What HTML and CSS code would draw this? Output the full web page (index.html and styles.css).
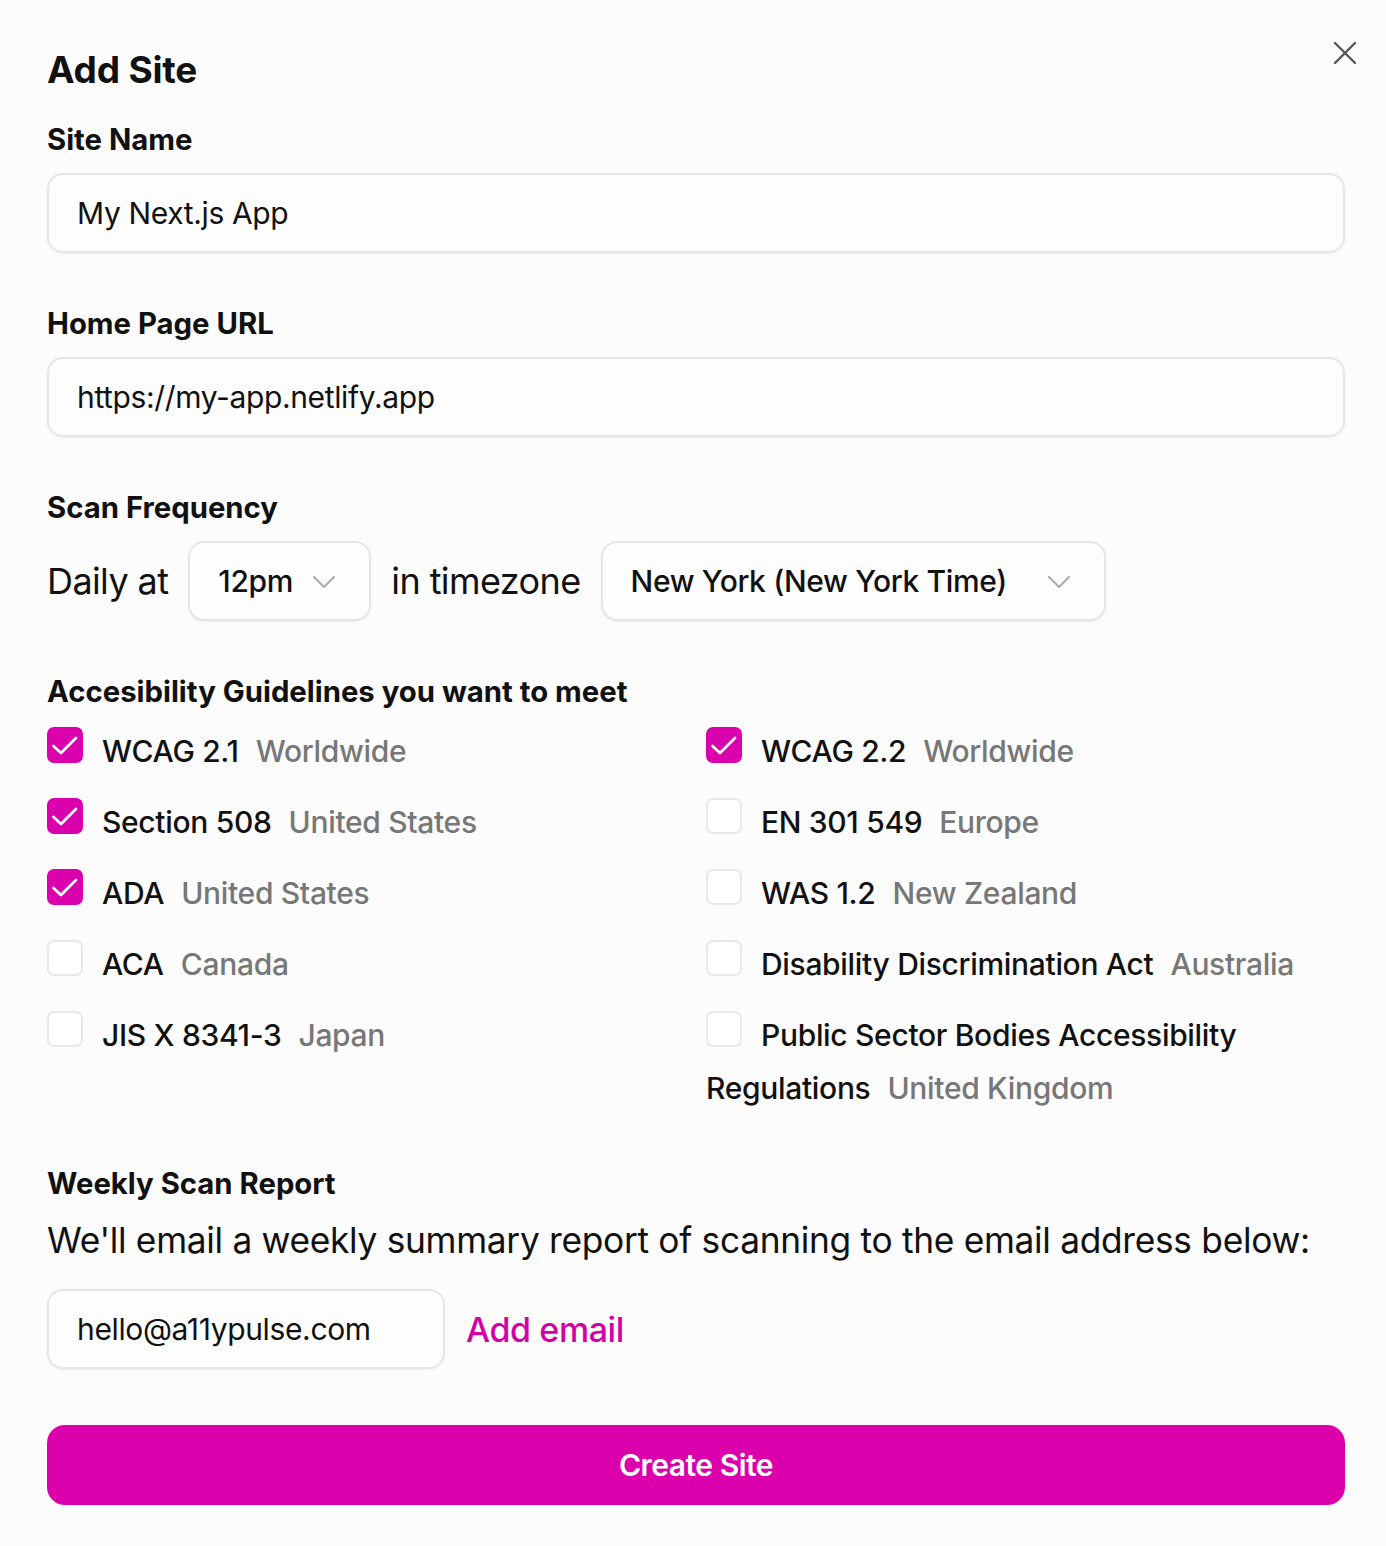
FILE: index.html
```html
<!DOCTYPE html>
<html lang="en">
<head>
<meta charset="utf-8">
<title>Add Site</title>
<link rel="stylesheet" href="styles.css">
</head>
<body>
<div class="modal">
  <button class="close" aria-label="Close">
    <svg width="24" height="24" viewBox="0 0 24 24"><path d="M2 2 L22 22 M22 2 L2 22" stroke="#555" stroke-width="2.4" stroke-linecap="round" fill="none"/></svg>
  </button>
  <h1 class="title">Add Site</h1>

  <section class="field">
    <div class="label">Site Name</div>
    <div class="input">My Next.js App</div>
  </section>

  <section class="field">
    <div class="label">Home Page URL</div>
    <div class="input">https://my-app.netlify.app</div>
  </section>

  <section class="field">
    <div class="label">Scan Frequency</div>
    <div class="freq">
      <span class="freq-text">Daily at</span>
      <div class="select select-time"><span>12pm</span><svg class="chev" width="22" height="12" viewBox="0 0 22 12"><path d="M1 1 L11 11 L21 1" stroke="#aaa" stroke-width="2" fill="none" stroke-linecap="round" stroke-linejoin="round"/></svg></div>
      <span class="freq-text">in timezone</span>
      <div class="select select-tz"><span>New York (New York Time)</span><svg class="chev" width="22" height="12" viewBox="0 0 22 12"><path d="M1 1 L11 11 L21 1" stroke="#aaa" stroke-width="2" fill="none" stroke-linecap="round" stroke-linejoin="round"/></svg></div>
    </div>
  </section>

  <section class="field field-guides">
    <div class="label">Accesibility Guidelines you want to meet</div>
    <div class="guides">
      <div class="item"><span class="box on"><svg viewBox="0 0 36 36"><path d="M6.5 19 L14 26 L29 11" stroke="#fff" stroke-width="2.8" fill="none" stroke-linecap="round" stroke-linejoin="round"/></svg></span><span class="name">WCAG 2.1</span><span class="region">Worldwide</span></div>
      <div class="item"><span class="box on"><svg viewBox="0 0 36 36"><path d="M6.5 19 L14 26 L29 11" stroke="#fff" stroke-width="2.8" fill="none" stroke-linecap="round" stroke-linejoin="round"/></svg></span><span class="name">WCAG 2.2</span><span class="region">Worldwide</span></div>
      <div class="item"><span class="box on"><svg viewBox="0 0 36 36"><path d="M6.5 19 L14 26 L29 11" stroke="#fff" stroke-width="2.8" fill="none" stroke-linecap="round" stroke-linejoin="round"/></svg></span><span class="name">Section 508</span><span class="region">United States</span></div>
      <div class="item"><span class="box"></span><span class="name">EN 301 549</span><span class="region">Europe</span></div>
      <div class="item"><span class="box on"><svg viewBox="0 0 36 36"><path d="M6.5 19 L14 26 L29 11" stroke="#fff" stroke-width="2.8" fill="none" stroke-linecap="round" stroke-linejoin="round"/></svg></span><span class="name">ADA</span><span class="region">United States</span></div>
      <div class="item"><span class="box"></span><span class="name">WAS 1.2</span><span class="region">New Zealand</span></div>
      <div class="item"><span class="box"></span><span class="name">ACA</span><span class="region">Canada</span></div>
      <div class="item"><span class="box"></span><span class="name">Disability Discrimination Act</span><span class="region">Australia</span></div>
      <div class="item"><span class="box"></span><span class="name">JIS X 8341-3</span><span class="region">Japan</span></div>
      <div class="item"><span class="box"></span><span class="name-part">Public Sector Bodies Accessibility</span> <span class="name">Regulations</span><span class="region">United Kingdom</span></div>
    </div>
  </section>

  <section class="field field-report">
    <div class="label">Weekly Scan Report</div>
    <p class="desc">We'll email a weekly summary report of scanning to the email address below:</p>
    <div class="email-row">
      <div class="input input-email">hello@a11ypulse.com</div>
      <a class="add-email" href="#">Add email</a>
    </div>
  </section>

  <button class="submit">Create Site</button>
</div>
</body>
</html>
```
FILE: styles.css
```css
* { box-sizing: border-box; }
html, body {
  margin: 0;
  padding: 0;
  background: #fcfcfc;
}
body {
  font-family: Inter, "Noto Sans", "Liberation Sans", sans-serif;
  color: #111;
}
.modal {
  position: relative;
  width: 1298px;
  margin-left: 47px;
  padding-top: 48px;
  padding-bottom: 42px;
}
.close {
  position: absolute;
  top: 40px;
  right: -13px;
  width: 26px;
  height: 26px;
  padding: 1px;
  border: 0;
  background: none;
  cursor: pointer;
}
.close svg { display: block; }
.title {
  margin: 0 0 31px;
  font-size: 37px;
  line-height: 44px;
  font-weight: 700;
  letter-spacing: -0.2px;
}
.field { margin-bottom: 54px; }
.label {
  font-size: 29.3px;
  line-height: 34px;
  font-weight: 700;
  margin-bottom: 16px;
}
.input {
  height: 80px;
  border: 2px solid #e6e6e6;
  border-radius: 16px;
  background: #fdfdfd;
  box-shadow: 0 1px 3px rgba(0, 0, 0, 0.05);
  display: flex;
  align-items: center;
  padding-left: 28px;
  font-size: 30px;
  font-weight: 400;
  letter-spacing: -0.36px;
}
.freq {
  display: flex;
  align-items: center;
  gap: 20px;
}
.freq-text {
  font-size: 36px;
  font-weight: 400;
  letter-spacing: -0.6px;
}
.select {
  height: 80px;
  border: 2px solid #e6e6e6;
  border-radius: 16px;
  background: #fdfdfd;
  box-shadow: 0 1px 3px rgba(0, 0, 0, 0.05);
  display: flex;
  align-items: center;
  justify-content: space-between;
  padding: 0 34px 0 28px;
  font-size: 30px;
  font-weight: 500;
  letter-spacing: -0.37px;
}
.select-time { width: 183px; }
.select-tz { width: 505px; }
.chev { display: block; margin-top: 2px; }
.field-guides { margin-bottom: 52px; }
.guides {
  display: grid;
  grid-template-columns: 639px 639px;
  column-gap: 20px;
  row-gap: 18px;
}
.item {
  font-size: 30px;
  line-height: 53px;
  font-weight: 500;
  letter-spacing: -0.32px;
}
.box {
  display: inline-block;
  width: 36px;
  height: 36px;
  border: 2px solid #e8e8e8;
  border-radius: 7px;
  background: #fff;
  margin-right: 19px;
  vertical-align: -1px;
  overflow: hidden;
}
.box.on {
  background: #db00ad;
  border-color: #db00ad;
}
.box svg {
  display: block;
  width: 36px;
  height: 36px;
  margin: -2px;
}
.name { margin-right: 17px; }
.region { color: #777; font-weight: 500; }
.desc {
  margin: 18px 0 26px;
  font-size: 35.3px;
  line-height: 44px;
  font-weight: 400;
  letter-spacing: -0.3px;
}
.email-row {
  display: flex;
  align-items: center;
  gap: 21px;
}
.input-email { width: 398px; }
.add-email {
  color: #d400a6;
  text-decoration: none;
  font-size: 34px;
  font-weight: 500;
  letter-spacing: -0.4px;
}
.field-report { margin-bottom: 56px; }
.submit {
  display: block;
  width: 100%;
  height: 80px;
  border: 0;
  border-radius: 18px;
  background: #dc00ac;
  color: #fff;
  font-family: inherit;
  font-size: 30px;
  font-weight: 600;
  letter-spacing: -0.5px;
}
```
